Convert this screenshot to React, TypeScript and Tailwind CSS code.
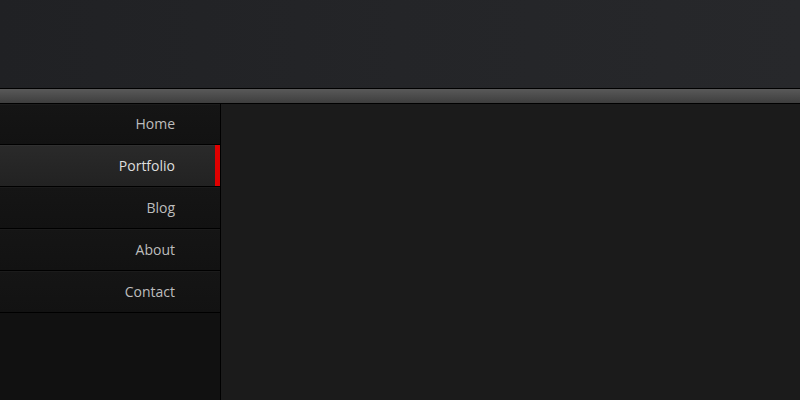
const items = ["Home", "Portfolio", "Blog", "About", "Contact"];

const App = () => {
  const active = "Portfolio";
  return (
    <div
      className="w-[800px] h-[400px] overflow-hidden flex flex-col bg-[#1b1b1b]"
      style={{ fontFamily: '"Open Sans", "Noto Sans", sans-serif' }}
    >
      <div className="h-[88px] shrink-0 bg-gradient-to-r from-[#202124] via-[#242528] to-[#27282b]" />
      <div className="h-[16px] shrink-0 border-y border-black bg-gradient-to-b from-[#595959] to-[#3e3e3e]" />
      <div className="flex flex-1">
        <nav className="w-[221px] shrink-0 border-r border-black bg-[#111111] flex flex-col">
          {items.map((item, i) => {
            const isActive = item === active;
            const size = i === 0 ? "h-[41px] pb-[2px]" : "h-[42px]";
            return (
              <div
                key={item}
                className={
                  isActive
                    ? `relative ${size} flex items-center justify-end pr-[45px] border-b border-black shadow-[inset_0_1px_0_#303030] bg-gradient-to-b from-[#2a2a2a] to-[#222222] text-[14px] text-[#dedede]`
                    : `relative ${size} flex items-center justify-end pr-[45px] border-b border-black shadow-[inset_0_1px_0_#1b1b1b] bg-gradient-to-b from-[#151515] to-[#121212] text-[14px] text-[#bdbdbd]`
                }
              >
                {item}
                {isActive && (
                  <span className="absolute right-0 top-0 bottom-0 w-[5px] bg-[#e00000]" />
                )}
              </div>
            );
          })}
        </nav>
        <main className="flex-1 bg-[#1b1b1b]" />
      </div>
    </div>
  );
};

export default App;
